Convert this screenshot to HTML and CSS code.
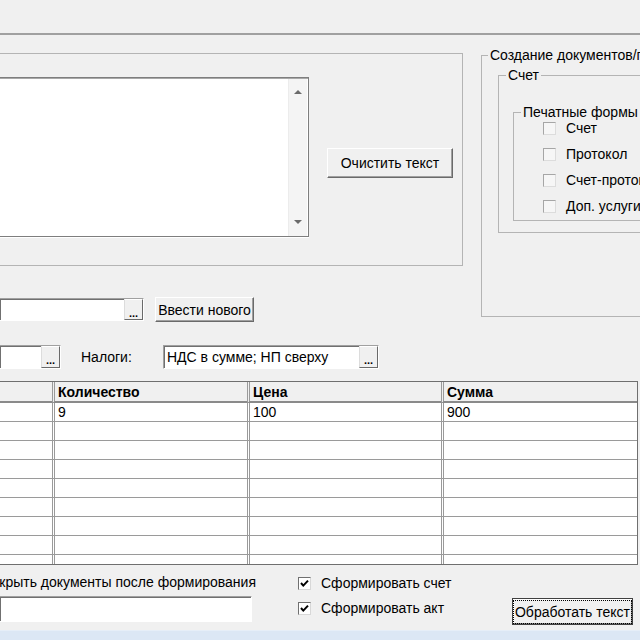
FILE: index.html
```html
<!DOCTYPE html>
<html lang="ru">
<head>
<meta charset="utf-8">
<title>Обработка текста</title>
<link rel="stylesheet" href="styles.css">
</head>
<body>
<div class="window">
  <div class="topbar"></div>
  <div class="rule"></div>

  <div class="upper">
    <div class="leftcol">
      <fieldset class="grp grp-text">
        <div class="grp-text-inner">
          <div class="memo">
            <div class="memo-body"></div>
            <div class="vscroll"><span class="arr arr-up"></span><span class="arr arr-down"></span></div>
          </div>
          <button class="btn btn-clear">Очистить текст</button>
        </div>
      </fieldset>
      <div class="row row-client">
        <div class="edit edit-client"><span class="edit-text"></span><span class="dots">...</span></div>
        <button class="btn btn-new">Ввести нового</button>
      </div>
    </div>

    <fieldset class="grp grp-docs">
      <legend class="lg-docs">Создание документов/протоколов</legend>
      <fieldset class="grp grp-inv">
        <legend class="lg-inv">Счет</legend>
        <fieldset class="grp grp-print">
          <legend class="lg-print">Печатные формы</legend>
          <div class="chk"><span class="box box-off"></span><span class="chk-label">Счет</span></div>
          <div class="chk"><span class="box box-off"></span><span class="chk-label">Протокол</span></div>
          <div class="chk"><span class="box box-off"></span><span class="chk-label">Счет-протокол</span></div>
          <div class="chk"><span class="box box-off"></span><span class="chk-label">Доп. услуги</span></div>
        </fieldset>
      </fieldset>
    </fieldset>
  </div>

  <div class="row row-tax">
    <div class="edit edit-short"><span class="edit-text"></span><span class="dots">...</span></div>
    <span class="lbl">Налоги:</span>
    <div class="edit edit-tax"><span class="edit-text">НДС в сумме; НП сверху</span><span class="dots">...</span></div>
  </div>

  <div class="grid">
    <table>
      <thead>
        <tr>
          <th class="c1"></th>
          <th class="c2">Количество</th>
          <th class="c3">Цена</th>
          <th class="c4">Сумма</th>
        </tr>
      </thead>
      <tbody>
        <tr><td></td><td>9</td><td>100</td><td>900</td></tr>
        <tr><td></td><td></td><td></td><td></td></tr>
        <tr><td></td><td></td><td></td><td></td></tr>
        <tr><td></td><td></td><td></td><td></td></tr>
        <tr><td></td><td></td><td></td><td></td></tr>
        <tr><td></td><td></td><td></td><td></td></tr>
        <tr><td></td><td></td><td></td><td></td></tr>
        <tr><td></td><td></td><td></td><td></td></tr>
        <tr><td></td><td></td><td></td><td></td></tr>
        <tr><td></td><td></td><td></td><td></td></tr>
      </tbody>
    </table>
  </div>

  <div class="bottom">
    <div class="bcol-left">
      <div class="open-text">Открыть документы после формирования</div>
      <div class="edit edit-bottom"></div>
    </div>
    <div class="bcol-mid">
      <div class="chk chk-main"><span class="box box-on"><svg width="11" height="11" viewBox="0 0 11 11"><path d="M2 5 L4.3 7.6 L9 2.6" fill="none" stroke="#000" stroke-width="2"/></svg></span><span class="chk-label">Сформировать счет</span></div>
      <div class="chk chk-main"><span class="box box-on"><svg width="11" height="11" viewBox="0 0 11 11"><path d="M2 5 L4.3 7.6 L9 2.6" fill="none" stroke="#000" stroke-width="2"/></svg></span><span class="chk-label">Сформировать акт</span></div>
    </div>
    <button class="btn btn-process"><span class="focus">Обработать текст</span></button>
  </div>

  <div class="taskbar"></div>
</div>
</body>
</html>
```

FILE: styles.css
```css
* { box-sizing: border-box; }

html, body {
  margin: 0;
  padding: 0;
  overflow: hidden;
}

body {
  background: #f0f0f0;
  color: #000;
  font-family: "Liberation Sans", Arial, sans-serif;
  font-size: 14px;
  line-height: 16px;
}

.window {
  width: 640px;
  height: 640px;
  overflow: hidden;
  display: flex;
  flex-direction: column;
}

.topbar { height: 33px; flex: none; }

.rule {
  height: 2px;
  flex: none;
  background: #a0a0a0;
}

/* ---------- upper area ---------- */
.upper {
  display: flex;
  align-items: flex-start;
  flex: none;
}

.leftcol {
  width: 463px;
  flex: none;
}

fieldset.grp {
  margin: 0;
  padding: 0;
  min-width: 0;
  border: 1px solid #b4b4b4;
}

legend {
  padding: 0 2px;
  line-height: 16px;
  white-space: nowrap;
}

fieldset.grp-text {
  margin-top: 18px;
  height: 213px;
  border-left: none;
}

.grp-text-inner {
  display: flex;
  align-items: flex-start;
}

.memo {
  margin-top: 23px;
  width: 309px;
  height: 160px;
  display: flex;
  background: #fff;
  border: 1px solid #7e7e7e;
  border-left: none;
  box-shadow: inset 0 1px 0 #a8a8a8, 0 1px 0 #fff;
}

.memo-body { flex: 1; }

.vscroll {
  width: 19px;
  margin: 1px 1px 0 0;
  background: #f4f4f4;
  border-left: 1px solid #ececec;
  display: flex;
  flex-direction: column;
  justify-content: space-between;
  align-items: center;
  padding: 11px 0 12px;
}

.arr {
  width: 0;
  height: 0;
  border-left: 4px solid transparent;
  border-right: 4px solid transparent;
}
.arr-up { border-bottom: 4px solid #6a6a6a; }
.arr-down { border-top: 4px solid #6a6a6a; }

/* ---------- buttons ---------- */
.btn {
  font: inherit;
  color: #000;
  background: #f0f0f0;
  border: 1px solid;
  border-color: #ffffff #6a6a6a #6a6a6a #ffffff;
  box-shadow: inset -1px -1px 0 #a0a0a0;
  padding: 0;
  display: flex;
  align-items: center;
  justify-content: center;
  white-space: nowrap;
}

.btn-clear {
  margin-top: 94px;
  margin-left: 18px;
  width: 126px;
  height: 30px;
}

.btn-new {
  margin-left: 11px;
  width: 99px;
  height: 25px;
}

.btn-process {
  margin-top: 33px;
  width: 121px;
  height: 27px;
  border-color: #404040;
  box-shadow: inset 1px 1px 0 #fff, inset -1px -1px 0 #8a8a8a;
}

.btn-process .focus {
  border: 1px dotted #000;
  padding: 3px 1px;
  line-height: 16px;
}

/* ---------- edits ---------- */
.row {
  display: flex;
  align-items: center;
  flex: none;
}

.edit {
  background: #fff;
  border: 1px solid;
  border-color: #a0a0a0 #ffffff #ffffff #a0a0a0;
  box-shadow: inset 1px 1px 0 #707070;
  display: flex;
  align-items: stretch;
}

.edit-text {
  flex: 1;
  padding: 3px 0 0 3px;
  white-space: nowrap;
  overflow: hidden;
}

.dots {
  width: 19px;
  flex: none;
  background: #f0f0f0;
  border: 1px solid;
  border-color: #ffffff #6a6a6a #6a6a6a #dcdcdc;
  font-size: 11px;
  font-weight: bold;
  line-height: 12px;
  text-align: center;
  padding-top: 7px;
  overflow: hidden;
}

.row-client {
  margin-top: 31px;
  height: 25px;
}

.edit-client {
  width: 144px;
  height: 23px;
  border-left: none;
}

.row-tax {
  margin-top: 23px;
  height: 24px;
}

.edit-short {
  width: 61px;
  height: 24px;
  border-left: none;
}

.lbl {
  margin-left: 20px;
  width: 82px;
}

.edit-tax {
  width: 216px;
  height: 24px;
}

/* ---------- right group ---------- */
fieldset.grp-docs {
  flex: none;
  margin-left: 18px;
  margin-top: 12px;
  width: 200px;
  padding-bottom: 83px;
}

.lg-docs { margin-left: 6px; }

fieldset.grp-inv {
  margin: 4px 0 0 16px;
  width: 180px;
  padding-bottom: 11px;
}

.lg-inv { margin-left: 7px; }

fieldset.grp-print {
  margin: 21px 0 0 14px;
  width: 165px;
  padding-bottom: 6px;
  display: flex;
  flex-direction: column;
  gap: 10px;
}

.lg-print { margin-left: 7px; }

.chk {
  display: flex;
  align-items: center;
  height: 16px;
  white-space: nowrap;
}

.grp-print .chk { margin-left: 29px; }

.box {
  width: 13px;
  height: 13px;
  flex: none;
  display: flex;
  align-items: center;
  justify-content: center;
}

.box-off {
  background: #f6f6f6;
  border: 1px solid;
  border-color: #a6a6a6 #dcdcdc #dcdcdc #a6a6a6;
}

.box-on {
  background: #fff;
  border: 1px solid;
  border-color: #707070 #d8d8d8 #d8d8d8 #707070;
}

.box-on svg { display: block; }

.chk-label { margin-left: 10px; }

/* ---------- grid ---------- */
.grid {
  flex: none;
  margin-top: 12px;
  width: 638px;
  height: 184px;
  overflow: hidden;
  background: #fff;
  border: 1px solid #6f6f6f;
  border-left: none;
}

.grid table {
  width: 637px;
  table-layout: fixed;
  border-collapse: separate;
  border-spacing: 0;
}

.grid th, .grid td {
  padding: 0 0 0 3px;
  text-align: left;
  vertical-align: middle;
  white-space: nowrap;
  overflow: hidden;
  border-bottom: 1px solid #9a9a9a;
}

.grid th {
  height: 21px;
  background: #f0f0f0;
  font-weight: bold;
  border-bottom: 2px solid #8a8a8a;
  padding-top: 1px;
}

.grid td {
  height: 19px;
  font-size: 14px;
}

.grid th + th, .grid td + td {
  border-left: 3px double #9a9a9a;
}

.c1 { width: 52px; }
.c2 { width: 195px; }
.c3 { width: 194px; }
.c4 { width: 196px; }

/* ---------- bottom ---------- */
.bottom {
  flex: none;
  display: flex;
  align-items: flex-start;
  height: 65px;
}

.bcol-left {
  width: 252px;
  flex: none;
}

.open-text {
  margin-top: 9px;
  margin-left: -18px;
  white-space: nowrap;
}

.edit-bottom {
  margin-top: 6px;
  width: 252px;
  height: 26px;
  border-left: none;
}

.bcol-mid {
  margin-left: 46px;
  width: 214px;
  flex: none;
  padding-top: 10px;
  display: flex;
  flex-direction: column;
  gap: 9px;
}

.taskbar {
  flex: none;
  height: 10px;
  background: #dce7f5;
  border-top: 1px solid #e6eef8;
}
```
